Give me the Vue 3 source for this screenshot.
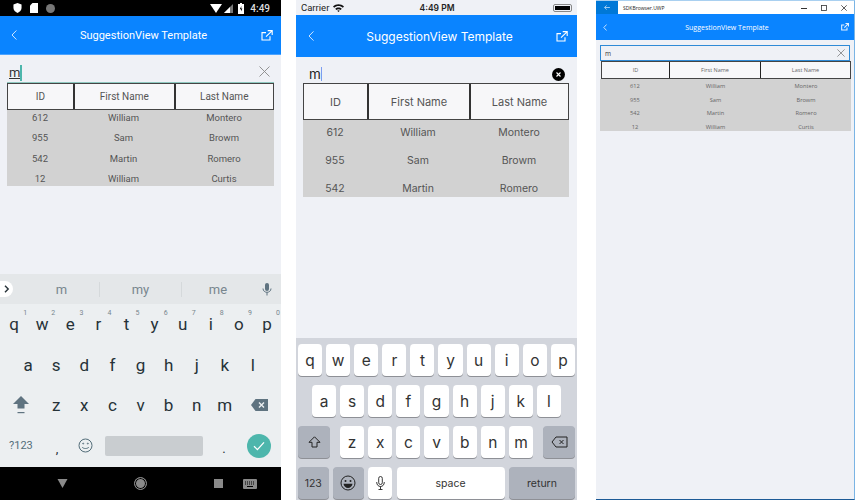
<template>
  <div class="screens">
    <!-- Android -->
    <section class="device android">
      <div class="a-status">
        <div class="a-status-left">
          <svg width="9" height="10" viewBox="0 0 10 11"><path d="M5 0 9.5 1.6V5.5C9.5 8 7.5 10 5 11 2.5 10 .5 8 .5 5.5V1.6Z" fill="#fff"/></svg>
          <svg width="8" height="10" viewBox="0 0 8 10"><path d="M2.5 0H8V10H0V2.5Z" fill="#fff"/></svg>
          <span class="a-dot"></span>
        </div>
        <div class="a-status-right">
          <svg width="12" height="9" viewBox="0 0 12 9"><path d="M0 0H12L6 9Z" fill="#fff"/></svg>
          <svg width="9" height="9" viewBox="0 0 9 9"><path d="M9 0V9H0Z" fill="#777"/><path d="M6 3V9H0Z" fill="#fff"/></svg>
          <svg class="a-batt" width="6" height="11" viewBox="0 0 6 11"><path d="M2 0H4V1H6V11H0V1H2Z" fill="#fff"/><path d="M3.4 3 1.8 6.2H3V8.6L4.4 5.4H3.2Z" fill="#000"/></svg>
          <span class="a-time">4:49</span>
        </div>
      </div>
      <header class="bar a-bar">
        <svg class="back" width="6" height="10" viewBox="0 0 6 10"><path d="M5.4.5 1 5 5.4 9.5" fill="none" stroke="#e4f0ff" stroke-width=".9"/></svg>
        <span class="title">SuggestionView Template</span>
        <svg class="open" width="12" height="11" viewBox="0 0 12 11"><path d="M9 6.2V10H1V2.6H5M6.7.6H11.2V5M11 .8 5 6.6" fill="none" stroke="#fff" stroke-width="1.1"/></svg>
      </header>
      <div class="a-body">
        <div class="a-input">
          <span class="a-typed">m</span><span class="a-caret"></span>
          <svg class="a-clear" width="11" height="11" viewBox="0 0 11 11"><path d="M.5.5 10.5 10.5M10.5.5.5 10.5" stroke="#888" stroke-width=".9"/></svg>
        </div>
        <div class="grid a-grid">
          <div class="grid-head">
            <span v-for="h in heads" :key="h">{{ h }}</span>
          </div>
          <div class="grid-rows">
            <div v-for="r in people" :key="r[0]" class="grid-row">
              <span v-for="c in r" :key="c">{{ c }}</span>
            </div>
          </div>
        </div>
      </div>
      <div class="a-kb">
        <div class="a-suggest">
          <span class="a-chevron">
            <svg width="6" height="8" viewBox="0 0 6 8"><path d="M1 .8 4.2 4 1 7.2" fill="none" stroke="#263238" stroke-width="1.4"/></svg>
          </span>
          <span class="a-word">m</span>
          <span class="a-word">my</span>
          <span class="a-word">me</span>
          <svg class="a-mic" width="10" height="13" viewBox="0 0 10 13"><rect x="3" y="0" width="4" height="8" rx="2" fill="#5f7380"/><path d="M1 5.5C1 8 3 9.3 5 9.3S9 8 9 5.5M5 9.3V12.5" fill="none" stroke="#5f7380" stroke-width="1"/></svg>
        </div>
        <div class="a-row">
          <span v-for="(k, i) in 'qwertyuiop'" :key="k" class="a-key">{{ k }}<sup>{{ (i + 1) % 10 }}</sup></span>
        </div>
        <div class="a-row a-row-2">
          <span v-for="k in 'asdfghjkl'" :key="k" class="a-key">{{ k }}</span>
        </div>
        <div class="a-row">
          <span class="a-key a-wide">
            <svg width="16" height="18" viewBox="0 0 16 18"><path d="M8 0 16 8H11.5V12.5H4.5V8H0Z" fill="#5f7380"/><rect x="4.5" y="16" width="7" height="1.2" fill="#5f7380"/></svg>
          </span>
          <span v-for="k in 'zxcvbnm'" :key="k" class="a-key">{{ k }}</span>
          <span class="a-key a-wide">
            <svg width="17" height="12" viewBox="0 0 17 12"><path d="M4.5 0H17V12H4.5L0 6Z" fill="#5f7380"/><path d="M8 3.5 13 8.5M13 3.5 8 8.5" stroke="#eceff1" stroke-width="1.4"/></svg>
          </span>
        </div>
        <div class="a-row a-row-4">
          <span class="a-sym">?123</span>
          <span class="a-key a-punct">,</span>
          <span class="a-key a-emoji">
            <svg width="15" height="15" viewBox="0 0 15 15" fill="none" stroke="#546e7a" stroke-width="1"><circle cx="7.5" cy="7.5" r="6.5"/><path d="M4.2 9C5 11 10 11 10.8 9"/><circle cx="5.2" cy="5.6" r=".5"/><circle cx="9.8" cy="5.6" r=".5"/></svg>
          </span>
          <span class="a-space"></span>
          <span class="a-key a-punct a-dot-key">.</span>
          <span class="a-go">
            <svg width="12" height="10" viewBox="0 0 12 10"><path d="M1 5.2 4.4 8.6 11 1.4" fill="none" stroke="#fff" stroke-width="1.3"/></svg>
          </span>
        </div>
      </div>
      <div class="a-nav">
        <svg width="11" height="9" viewBox="0 0 11 9"><path d="M.5 0H10.5L5.5 9Z" fill="#8a8a8a"/></svg>
        <span class="a-home"></span>
        <span class="a-recent"></span>
        <svg class="a-kb-icon" width="14" height="10" viewBox="0 0 14 10"><rect width="14" height="10" rx="1" fill="#8a8a8a"/><path d="M2 3H12M2 5H12" stroke="#000" stroke-width="1" stroke-dasharray="1 1"/><path d="M4 7.5H10" stroke="#000"/></svg>
      </div>
    </section>

    <!-- iOS -->
    <section class="device ios">
      <div class="i-status">
        <span class="i-carrier">Carrier
          <svg width="11" height="8" viewBox="0 0 11 8"><path d="M0 2.6C3 -.4 8-.4 11 2.6L9.8 3.8C7.4 1.5 3.6 1.5 1.2 3.8ZM2.2 4.8C4 3 7 3 8.8 4.8L7.6 6C6.5 4.9 4.5 4.9 3.4 6ZM4.2 6.8C5 6 6 6 6.8 6.8L5.5 8Z" fill="#111"/></svg>
        </span>
        <span class="i-time">4:49 PM</span>
        <span class="i-battery"><i></i></span>
      </div>
      <header class="bar i-bar">
        <svg class="back" width="6" height="10" viewBox="0 0 6 10"><path d="M5.5.4 1 5 5.5 9.6" fill="none" stroke="#e4f0ff" stroke-width=".9"/></svg>
        <span class="title">SuggestionView Template</span>
        <svg class="open" width="12" height="11" viewBox="0 0 12 11"><path d="M9 6.2V10H1V2.6H5M6.7.6H11.2V5M11 .8 5 6.6" fill="none" stroke="#fff" stroke-width="1.1"/></svg>
      </header>
      <div class="i-body">
        <div class="i-input">
          <span class="i-typed">m</span><span class="i-caret"></span>
          <span class="i-clear">
            <svg width="5" height="5" viewBox="0 0 5 5"><path d="M.5.5 4.5 4.5M4.5.5.5 4.5" stroke="#fff" stroke-width="1.1"/></svg>
          </span>
        </div>
        <div class="grid i-grid">
          <div class="grid-head">
            <span v-for="h in heads" :key="h">{{ h }}</span>
          </div>
          <div class="grid-rows">
            <div v-for="r in people.slice(0, 3)" :key="r[0]" class="grid-row">
              <span v-for="c in r" :key="c">{{ c }}</span>
            </div>
          </div>
        </div>
      </div>
      <div class="i-kb">
        <div class="i-row">
          <span v-for="k in 'qwertyuiop'" :key="k" class="i-key">{{ k }}</span>
        </div>
        <div class="i-row i-row-2">
          <span v-for="k in 'asdfghjkl'" :key="k" class="i-key">{{ k }}</span>
        </div>
        <div class="i-row">
          <span class="i-key i-fn i-shift">
            <svg width="13" height="12" viewBox="0 0 13 12"><path d="M6.5.8 12 6.3H9V11H4V6.3H1Z" fill="none" stroke="#222" stroke-width="1"/></svg>
          </span>
          <span class="i-letters">
            <span v-for="k in 'zxcvbnm'" :key="k" class="i-key">{{ k }}</span>
          </span>
          <span class="i-key i-fn i-shift">
            <svg width="17" height="12" viewBox="0 0 17 12"><path d="M5 1H16V11H5L1 6Z" fill="none" stroke="#222" stroke-width="1"/><path d="M8.5 4 12.5 8M12.5 4 8.5 8" stroke="#222" stroke-width="1"/></svg>
          </span>
        </div>
        <div class="i-row i-row-4">
          <span class="i-key i-fn i-small">123</span>
          <span class="i-key i-fn i-small">
            <svg width="16" height="16" viewBox="0 0 16 16"><circle cx="8" cy="8" r="7" fill="none" stroke="#222" stroke-width="1"/><circle cx="5.5" cy="6" r="1" fill="#222"/><circle cx="10.5" cy="6" r="1" fill="#222"/><path d="M3.5 8.8H12.5C12.2 11.5 10.2 13 8 13S3.8 11.5 3.5 8.8Z" fill="#222"/></svg>
          </span>
          <span class="i-key i-mic">
            <svg width="9" height="14" viewBox="0 0 9 14" fill="none" stroke="#222" stroke-width=".9"><rect x="2.7" y=".5" width="3.6" height="8" rx="1.8"/><path d="M.7 6C.7 9 2.5 10.5 4.5 10.5S8.3 9 8.3 6M4.5 10.5V13.5M2.5 13.5H6.5"/></svg>
          </span>
          <span class="i-key i-space">space</span>
          <span class="i-key i-fn i-return">return</span>
        </div>
      </div>
    </section>

    <!-- UWP -->
    <section class="device uwp">
      <div class="u-title">
        <span class="u-back">
          <svg width="6" height="5" viewBox="0 0 7 6"><path d="M3 .5.7 3 3 5.5M.7 3H7" fill="none" stroke="#cfe6fa" stroke-width=".9"/></svg>
        </span>
        <span class="u-app">SDKBrowser.UWP</span>
        <span class="u-controls">
          <svg width="6" height="6" viewBox="0 0 6 6"><path d="M0 3.5H6" stroke="#333"/></svg>
          <svg width="6" height="6" viewBox="0 0 6 6"><rect x=".5" y=".5" width="5" height="5" fill="none" stroke="#333" stroke-width=".8"/></svg>
          <svg width="6" height="6" viewBox="0 0 6 6"><path d="M.3.3 5.7 5.7M5.7.3.3 5.7" stroke="#333" stroke-width=".8"/></svg>
        </span>
      </div>
      <header class="bar u-bar">
        <svg class="back" width="4" height="7" viewBox="0 0 4 7"><path d="M3.6.5.8 3.5 3.6 6.5" fill="none" stroke="#d8eaff" stroke-width=".9"/></svg>
        <span class="title">SuggestionView Template</span>
        <svg class="open" width="8" height="8" viewBox="0 0 12 12"><path d="M9 6.8V10.6H1V3H5M6.7.8H11.2V5.3M11 1 5 7" fill="none" stroke="#e4f0ff" stroke-width="1.6"/></svg>
      </header>
      <div class="u-body">
        <div class="u-input">
          <span>m</span>
          <svg width="8" height="8" viewBox="0 0 8 8"><path d="M.4.4 7.6 7.6M7.6.4.4 7.6" stroke="#555" stroke-width=".6"/></svg>
        </div>
        <div class="grid u-grid">
          <div class="grid-head">
            <span v-for="h in heads" :key="h">{{ h }}</span>
          </div>
          <div class="grid-rows">
            <div v-for="r in people" :key="r[0]" class="grid-row">
              <span v-for="c in r" :key="c">{{ c }}</span>
            </div>
          </div>
        </div>
      </div>
    </section>
  </div>
</template>

<script setup>
const heads = ['ID', 'First Name', 'Last Name']

const people = [
  ['612', 'William', 'Montero'],
  ['955', 'Sam', 'Browm'],
  ['542', 'Martin', 'Romero'],
  ['12', 'William', 'Curtis']
]
</script>

<style>
body {
  background: #fff;
}
</style>

<style scoped>
.screens {
  display: flex;
  width: 855px;
  height: 500px;
  overflow: hidden;
  font-family: Roboto, "Liberation Sans", sans-serif;
}

.device {
  display: flex;
  flex-direction: column;
  flex: none;
  height: 500px;
  background: #eff1f6;
}

.android { width: 281px; }
.ios { width: 281px; margin-left: 15px; font-family: Inter, Roboto, sans-serif; }
.uwp {
  width: 259px;
  margin-left: 19px;
  box-sizing: border-box;
  border-top: 1px solid #a9d0f0;
  border-right: 1px solid #7ab4e4;
  border-bottom: 1px solid #1c5a96;
}

/* shared nav bar */
.bar {
  display: flex;
  align-items: center;
  flex: none;
  background: #0a84ff;
  color: #fff;
}

.title {
  flex: 1;
  text-align: center;
}

/* shared grid */
.grid-head {
  display: flex;
  background: #f7f7f9;
  border: 1px solid #444;
  color: #555;
}

.grid-head span {
  display: flex;
  align-items: center;
  justify-content: center;
  box-sizing: border-box;
  border-left: 2px solid #333;
}

.grid-head span:first-child { border-left: none; }

.grid-rows {
  background: #d2d2d2;
  color: #555;
  overflow: hidden;
}

.grid-row {
  display: flex;
  align-items: center;
}

.grid-row span { text-align: center; }

/* android */
.a-status {
  display: flex;
  align-items: center;
  justify-content: space-between;
  height: 16px;
  padding: 0 11px 0 13px;
  background: #000;
  flex: none;
}

.a-status-left,
.a-status-right {
  display: flex;
  align-items: center;
}

.a-status-left { gap: 8px; }
.a-status-right { gap: 2px; }

.a-batt { margin-left: 3px; }

.a-dot {
  width: 9px;
  height: 9px;
  border-radius: 50%;
  background: #777;
}

.a-time {
  margin-left: 4px;
  color: #ddd;
  font-size: 10px;
  font-weight: 500;
}

.a-bar {
  height: 38px;
  padding: 0 8px 0 11px;
  border-bottom: 1px solid #4ba3ff;
}

.a-bar .title { font-size: 11px; padding-left: 9px; }

.a-body {
  flex: 1;
  padding: 8px 7px 0;
}

.a-input {
  display: flex;
  align-items: center;
  height: 19px;
  padding-left: 2px;
  border-bottom: 1px solid #8fc9c0;
}

.a-typed {
  font-size: 13px;
  color: #333;
  text-decoration: underline;
}

.a-caret {
  width: 1.5px;
  height: 16px;
  background: #4db6ac;
}

.a-clear {
  margin-left: auto;
  margin-right: 4px;
  margin-bottom: 3px;
}

.a-grid { font-size: 9.5px; }
.a-grid .grid-head { height: 25px; font-size: 10px; }
.a-grid .grid-head span:nth-child(1) { width: 65px; }
.a-grid .grid-head span:nth-child(2) { width: 100.5px; }
.a-grid .grid-head span:nth-child(3) { flex: 1; }
.a-grid .grid-rows { height: 76px; }
.a-grid .grid-row { height: 20.5px; }
.a-grid .grid-row:first-child { margin-top: -3px; }
.a-grid .grid-row span:nth-child(1) { width: 66px; }
.a-grid .grid-row span:nth-child(2) { width: 101px; }
.a-grid .grid-row span:nth-child(3) { flex: 1; }

.a-kb {
  flex: none;
  height: 193px;
  background: #eceff1;
  color: #263238;
}

.a-suggest {
  display: flex;
  align-items: center;
  height: 30px;
  background: #e4e7e9;
  font-size: 13px;
  color: #78868e;
}

.a-chevron {
  display: flex;
  align-items: center;
  justify-content: center;
  width: 13px;
  height: 16px;
  background: #fff;
  border-radius: 0 8px 8px 0;
}

.a-word {
  box-sizing: border-box;
  width: 82px;
  text-align: center;
  line-height: 15px;
  border-left: 1px solid #d5d9db;
}

.a-word:nth-of-type(2) {
  width: 80px;
  margin-left: 6px;
  padding-left: 5px;
  border-left: none;
}

.a-word:nth-of-type(4) { width: 73px; }

.a-mic { margin-left: 8px; }

.a-row {
  display: flex;
  justify-content: center;
  align-items: center;
  height: 40.5px;
  font-size: 17px;
}

.a-row-2 { padding: 0 14px; }

.a-key {
  position: relative;
  display: flex;
  align-items: center;
  justify-content: center;
  flex: 1;
  height: 100%;
}

.a-key sup {
  position: absolute;
  top: 5px;
  right: 1px;
  font-size: 7px;
  line-height: 8px;
  color: #78868e;
}

.a-wide { flex: 1.5; }

.a-row-4 {
  justify-content: flex-start;
  padding-left: 9px;
}

.a-sym {
  width: 34px;
  font-size: 11px;
  color: #546e7a;
  white-space: nowrap;
}

.a-punct {
  flex: none;
  width: 28px;
  padding-top: 6px;
  box-sizing: border-box;
  font-size: 13px;
}

.a-emoji { flex: none; width: 28px; }

.a-space {
  flex: none;
  width: 98px;
  height: 20px;
  margin-left: 6px;
  border-radius: 2px;
  background: #c9cdd0;
}

.a-dot-key { margin-left: 7px; }

.a-go {
  display: flex;
  align-items: center;
  justify-content: center;
  width: 24px;
  height: 24px;
  margin-left: 8.5px;
  border-radius: 50%;
  background: #4db6ac;
}

.a-nav {
  display: flex;
  align-items: center;
  flex: none;
  height: 33px;
  padding-left: 57px;
  background: #000;
}

.a-home {
  width: 13px;
  height: 13px;
  margin-left: 66px;
  border-radius: 50%;
  border: 1px solid #8a8a8a;
  background: #8a8a8a;
  box-sizing: border-box;
  box-shadow: inset 0 0 0 1px #000;
}

.a-recent {
  width: 9px;
  height: 9px;
  margin-left: 67px;
  background: #8a8a8a;
}

.a-kb-icon { margin-left: 20px; }

/* ios */
.i-status {
  display: grid;
  grid-template-columns: 1fr auto 1fr;
  align-items: center;
  height: 15px;
  padding: 0 5px;
  font-size: 8.5px;
  color: #222;
  flex: none;
}

.i-carrier {
  display: flex;
  align-items: center;
  gap: 4px;
  font-size: 9.5px;
  font-family: Roboto, sans-serif;
}

.i-time {
  margin-left: 1px;
  font-weight: 600;
}

.i-battery {
  display: flex;
  justify-self: end;
  width: 19px;
  height: 8px;
  padding: 1px;
  box-sizing: border-box;
  border: 1px solid #888;
  border-radius: 2px;
}

.i-battery i {
  flex: 1;
  background: #000;
}

.i-bar {
  height: 42px;
  padding: 0 9px 0 12px;
}

.i-bar .title { font-size: 12px; font-weight: 400; padding-left: 9px; }

.i-body {
  flex: 1;
  padding: 8px 8px 0 7px;
}

.i-input {
  display: flex;
  align-items: center;
  height: 18px;
  padding-left: 6px;
}

.i-typed {
  font-size: 13.5px;
  color: #222;
}

.i-caret {
  width: 1.5px;
  height: 14px;
  background: #7b9df0;
}

.i-clear {
  display: flex;
  align-items: center;
  justify-content: center;
  width: 13px;
  height: 13px;
  margin-left: auto;
  margin-right: 4px;
  border-radius: 50%;
  background: #000;
}

.i-grid { font-size: 10.5px; }
.i-grid .grid-head { height: 35px; font-size: 11px; }
.i-grid .grid-head span:nth-child(1) { width: 63px; }
.i-grid .grid-head span:nth-child(2) { width: 102px; }
.i-grid .grid-head span:nth-child(3) { flex: 1; }
.i-grid .grid-rows { height: 77px; }
.i-grid .grid-row { height: 28px; }
.i-grid .grid-row:first-child { margin-top: -2px; }
.i-grid .grid-row span:nth-child(1) { width: 64px; }
.i-grid .grid-row span:nth-child(2) { width: 102px; }
.i-grid .grid-row span:nth-child(3) { flex: 1; }

.i-kb {
  display: flex;
  flex-direction: column;
  gap: 9px;
  flex: none;
  height: 162px;
  box-sizing: border-box;
  padding: 6px 2px 0;
  background: #d2d5dc;
}

.i-row {
  display: flex;
  gap: 4px;
  height: 32px;
}

.i-row-2 { padding: 0 14px; }

.i-key {
  display: flex;
  align-items: center;
  justify-content: center;
  flex: 1;
  border-radius: 4px;
  background: #fff;
  box-shadow: 0 1px 0 #8e9096;
  font-size: 15.5px;
  color: #333;
}

.i-fn { background: #adb2bc; }

.i-shift { flex: none; width: 32px; }

.i-letters {
  display: flex;
  flex: 1;
  gap: 4px;
  margin: 0 6px;
}

.i-small { flex: none; width: 30.5px; font-size: 10.5px; }
.i-mic { flex: none; width: 24px; }
.i-space { flex: none; width: 108px; font-size: 10.5px; }
.i-return { flex: 1; font-size: 10.5px; }
.i-row-4 { gap: 4.5px; }

/* uwp */
.u-title {
  display: flex;
  align-items: center;
  flex: none;
  height: 13px;
  background: #fff;
  font-family: "Open Sans", sans-serif;
}

.u-back {
  display: flex;
  align-items: center;
  justify-content: center;
  width: 22px;
  height: 13px;
  background: #0078d7;
}

.u-app {
  margin-left: 5px;
  font-size: 5px;
  color: #222;
}

.u-controls {
  display: flex;
  gap: 14px;
  margin-left: auto;
  margin-right: 7px;
}

.u-bar {
  height: 26px;
  padding: 0 5px 0 7px;
  font-family: "Open Sans", sans-serif;
}

.u-bar .title { font-size: 7px; padding-left: 6px; }

.u-body {
  flex: 1;
  padding: 5px 3px 0 4px;
  font-family: "Open Sans", sans-serif;
}

.u-input {
  display: flex;
  align-items: center;
  justify-content: space-between;
  height: 16px;
  box-sizing: border-box;
  margin-right: 1px;
  padding: 0 4px;
  border: 1px solid #2f8ad6;
  font-size: 6.5px;
  color: #333;
}

.u-grid { font-size: 5.7px; }
.u-grid .grid-head { height: 16px; margin-left: 1px; font-size: 5.5px; color: #666; }
.u-grid .grid-head span:nth-child(1) { width: 67px; }
.u-grid .grid-head span:nth-child(2) { width: 91px; }
.u-grid .grid-head span:nth-child(3) { flex: 1; }
.u-grid .grid-head span { border-left-width: 1px; border-left-color: #222; }
.u-grid .grid-rows { height: 52px; color: #666; }
.u-grid .grid-row { height: 13.7px; }
.u-grid .grid-row span:nth-child(1) { width: 70px; }
.u-grid .grid-row span:nth-child(2) { width: 91px; }
.u-grid .grid-row span:nth-child(3) { flex: 1; }
</style>
